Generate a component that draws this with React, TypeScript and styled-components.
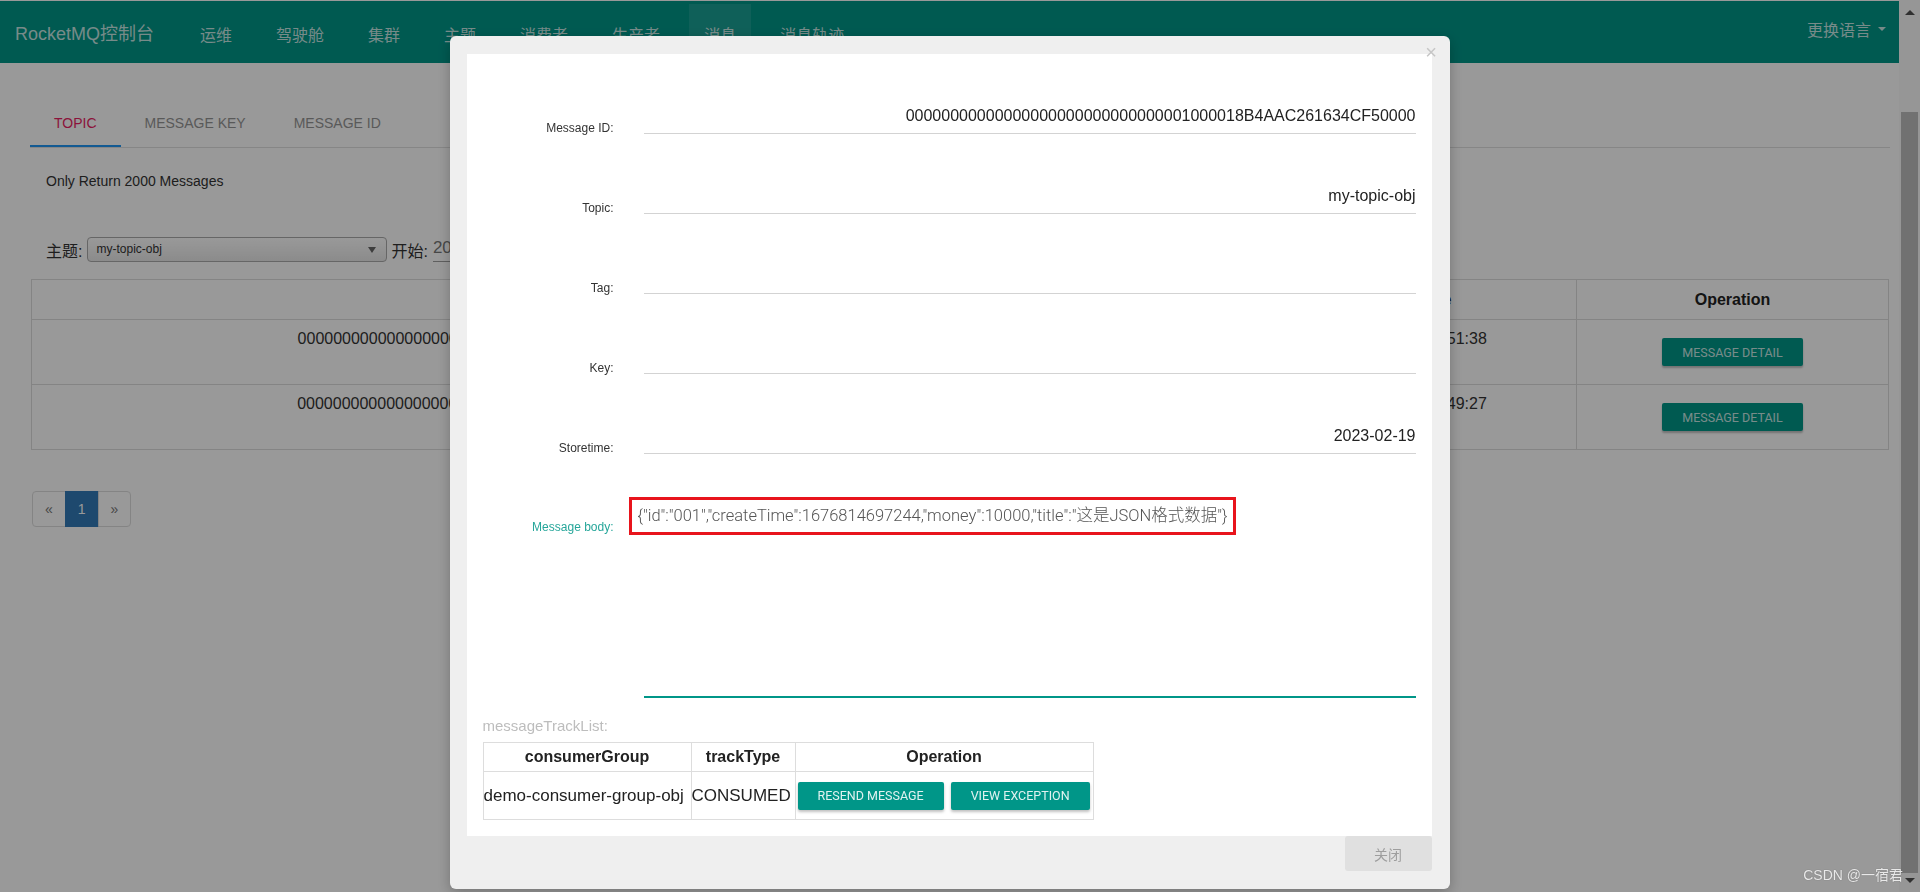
import React from "react";
import styled, { createGlobalStyle } from "styled-components";

const TEAL = "#009688";

const GlobalStyle = createGlobalStyle`
  html, body { margin: 0; padding: 0; height: 100%; overflow: hidden; }
  body {
    font-family: "Liberation Sans", Arial, "Noto Sans CJK SC", sans-serif;
    color: #333;
    background: #fff;
  }
  * { box-sizing: border-box; }
`;

/* ---------- page under the dialog ---------- */

const Page = styled.div`
  display: flex;
  width: 1920px;
  height: 892px;
`;

const Main = styled.div`
  flex: 1;
  min-width: 0;
  display: flex;
  flex-direction: column;
  background: #fff;
`;

const Navbar = styled.header`
  height: 63px;
  border-top: 1px solid #fff;
  background: ${TEAL};
  display: flex;
  align-items: stretch;
  padding: 0 13px 0 15px;
  color: rgba(255, 255, 255, 0.78);
  font-family: "Liberation Sans", Arial, "Noto Sans CJK SC", sans-serif;
`;

const Brand = styled.div`
  display: flex;
  align-items: center;
  font-size: 18px;
  margin-right: 24px;
`;

const NavList = styled.nav`
  display: flex;
  flex: 1;
`;

const NavItem = styled.div<{ $active?: boolean }>`
  display: flex;
  align-items: center;
  margin: 3px 7px 0;
  padding: 0 15px;
  font-size: 16px;
  background: ${(p) => (p.$active ? "rgba(255,255,255,0.1)" : "transparent")};
`;

const LangMenu = styled.div`
  display: flex;
  align-items: center;
  gap: 7px;
  font-size: 16px;
  padding-bottom: 6px;
`;

const Caret = styled.span`
  width: 0;
  height: 0;
  border-left: 4px solid transparent;
  border-right: 4px solid transparent;
  border-top: 4px solid rgba(255, 255, 255, 0.78);
`;

const Content = styled.main`
  flex: 1;
  padding: 36px 9px 0 30px;
`;

const TabBar = styled.div`
  display: flex;
  height: 49px;
  border-bottom: 1px solid #e0e0e0;
`;

const Tab = styled.div<{ $active?: boolean }>`
  height: 48px;
  padding: 0 24px;
  display: flex;
  align-items: center;
  font-size: 14px;
  color: ${(p) => (p.$active ? "#e91e63" : "#959595")};
  box-shadow: ${(p) => (p.$active ? "inset 0 -2px 0 #2196f3" : "none")};
`;

const Notice = styled.div`
  margin: 24px 0 0 16px;
  font-size: 14px;
  line-height: 18px;
  color: #333;
`;

const QueryRow = styled.div`
  display: flex;
  align-items: center;
  height: 25px;
  margin: 47px 0 0 16px;
`;

const QueryLabel = styled.span`
  font-size: 16px;
  color: #333;
  margin-right: 5px;
`;

const FakeSelect = styled.div`
  width: 300px;
  height: 25px;
  border: 1px solid #aaa;
  border-radius: 4px;
  background: linear-gradient(#fff 0%, #f4f4f4 50%, #e8e8e8 100%);
  font-size: 12px;
  line-height: 23px;
  padding: 0 10px 0 8px;
  margin-right: 4px;
  color: #333;
  display: flex;
  justify-content: space-between;
  align-items: center;
`;

const SelectArrow = styled.span`
  width: 0;
  height: 0;
  border-left: 4px solid transparent;
  border-right: 4px solid transparent;
  border-top: 6px solid #666;
`;

const DateInput = styled.div`
  width: 300px;
  height: 25px;
  border-bottom: 1px solid #9e9e9e;
  font-size: 17px;
  color: #777;
  line-height: 22px;
`;

const MsgTable = styled.table`
  margin: 17px 2px 0 1px;
  width: calc(100% - 3px);
  table-layout: fixed;
  border-collapse: collapse;
  font-size: 16px;
  color: #333;
  th, td { border: 1px solid #ddd; text-align: center; }
  th { height: 40px; font-weight: bold; color: #222; }
  td { height: 65px; vertical-align: top; padding: 8px 0; line-height: 22px; }
`;

const DetailButton = styled.button`
  margin: 10px 0 0;
  height: 28px;
  padding: 0 20px;
  border: none;
  border-radius: 2px;
  background: ${TEAL};
  color: rgba(255, 255, 255, 0.8);
  font-family: Roboto, "Liberation Sans", sans-serif;
  font-size: 12.5px;
  box-shadow: 0 2px 2px rgba(0, 0, 0, 0.25);
`;

const Pagination = styled.div`
  display: inline-flex;
  margin: 41px 0 0 2px;
  border-radius: 4px;
`;

const PageItem = styled.span<{ $active?: boolean }>`
  display: block;
  padding: 7px 12px;
  line-height: 20px;
  font-size: 14px;
  margin-left: -1px;
  border: 1px solid ${(p) => (p.$active ? "#337ab7" : "#ddd")};
  background: ${(p) => (p.$active ? "#337ab7" : "#fff")};
  color: ${(p) => (p.$active ? "#fff" : "#777")};
  &:first-child { border-radius: 4px 0 0 4px; margin-left: 0; }
  &:last-child { border-radius: 0 4px 4px 0; }
`;

const ScrollBar = styled.div`
  width: 21px;
  background: #fbfbfb;
  display: flex;
  flex-direction: column;
  align-items: center;
`;

const ArrowUp = styled.span`
  margin-top: 10px;
  width: 0;
  height: 0;
  border-left: 5px solid transparent;
  border-right: 5px solid transparent;
  border-bottom: 5px solid #505050;
`;

const ScrollThumb = styled.div`
  margin-top: 97px;
  width: 17px;
  flex: 1;
  background: #bcbcbc;
`;

const ArrowDown = styled.span`
  margin: 5px 0 9px;
  width: 0;
  height: 0;
  border-left: 5px solid transparent;
  border-right: 5px solid transparent;
  border-top: 5px solid #505050;
`;

/* ---------- dialog ---------- */

const Backdrop = styled.div`
  position: fixed;
  inset: 0;
  background: rgba(0, 0, 0, 0.4);
`;

const ModalLayer = styled.div`
  position: fixed;
  top: 0;
  left: 0;
  right: 21px;
  bottom: 0;
  display: flex;
  justify-content: center;
  align-items: flex-start;
  padding-top: 36px;
`;

const Modal = styled.div`
  position: relative;
  width: 1000px;
  height: 853px;
  background: #efefef;
  border-radius: 6px;
  padding: 18px 18px 18px 17px;
  display: flex;
  flex-direction: column;
  box-shadow: 0 4px 14px rgba(0, 0, 0, 0.25);
`;

const CloseX = styled.span`
  position: absolute;
  top: 6px;
  right: 12px;
  width: 13px;
  text-align: center;
  font-size: 20px;
  line-height: 20px;
  color: #c6c6c6;
`;

const ModalBody = styled.div`
  height: 782px;
  background: #fff;
  padding: 0 16px;
  display: flex;
  flex-direction: column;
`;

const FormRow = styled.div`
  display: grid;
  grid-template-columns: 131px 1fr;
  column-gap: 30px;
  height: 80px;
  align-items: end;
`;

const FieldLabel = styled.label<{ $focused?: boolean }>`
  text-align: right;
  font-size: 12px;
  line-height: 14px;
  margin-bottom: -1px;
  color: ${(p) => (p.$focused ? "#26a69a" : "#333")};
`;

const FieldValue = styled.div`
  height: 41px;
  padding-top: 5px;
  border-bottom: 1px solid #d3d3d3;
  text-align: right;
  font-size: 16px;
  line-height: 35px;
  color: #222;
`;

const BodyRow = styled.div`
  display: grid;
  grid-template-columns: 131px 1fr;
  column-gap: 30px;
  align-items: start;
`;

const BodyLabel = styled(FieldLabel)`
  padding-top: 66px;
`;

const BodyField = styled.div`
  margin-top: 43px;
  height: 201px;
  border-bottom: 2px solid ${TEAL};
`;

const Annotation = styled.span`
  display: inline-block;
  margin-left: -15px;
  border: 3px solid #e8141c;
  padding: 0 6px;
  line-height: 32px;
  font-family: Roboto, "Noto Sans CJK SC", sans-serif;
  font-weight: 300;
  font-size: 16.5px;
  color: #555;
  white-space: nowrap;
`;

const TrackTitle = styled.div`
  margin-top: 19px;
  font-size: 15px;
  line-height: 18px;
  color: #bdbdbd;
`;

const TrackTable = styled.table`
  margin-top: 7px;
  width: 610px;
  table-layout: fixed;
  border-collapse: collapse;
  color: #222;
  th, td { border: 1px solid #ddd; padding: 0; }
  th { height: 29px; font-size: 16px; font-weight: bold; text-align: center; }
  td { height: 48px; font-size: 17px; text-align: left; white-space: nowrap; }
`;

const ActionCell = styled.div`
  display: flex;
  gap: 7px;
  padding: 0 2px;
`;

const ActionButton = styled.button`
  height: 28px;
  padding: 0 20px;
  border: none;
  border-radius: 2px;
  background: ${TEAL};
  color: rgba(255, 255, 255, 0.88);
  font-family: Roboto, "Liberation Sans", sans-serif;
  font-size: 12.5px;
  box-shadow: 0 2px 3px rgba(0, 0, 0, 0.25);
`;

const ModalFooter = styled.div`
  display: flex;
  justify-content: flex-end;
`;

const CloseButton = styled.button`
  width: 87px;
  height: 35px;
  border: none;
  border-radius: 3px;
  background: #e0e0e0;
  color: #9e9e9e;
  font-family: "Noto Sans CJK SC", sans-serif;
  font-size: 14px;
`;

const Watermark = styled.div`
  position: fixed;
  right: 17px;
  bottom: 9px;
  font-size: 14px;
  line-height: 16px;
  color: rgba(255, 255, 255, 0.85);
  font-family: "Liberation Sans", "Noto Sans CJK SC", sans-serif;
  text-shadow: 0 0 1px rgba(0, 0, 0, 0.4);
`;

const NAV = ["运维", "驾驶舱", "集群", "主题", "消费者", "生产者", "消息", "消息轨迹"];
const MSG_ID = "0000000000000000000000000000000" + "1000018B4AAC261634CF50000";
const ROWS = [
  { id: MSG_ID, tag: "", key: "", time: "2023-02-19 21:51:38" },
  { id: "0000000000000000000000000000000" + "1000018B4AAC261634C2A0000", tag: "", key: "", time: "2023-02-19 21:49:27" },
];

const FIELDS: [string, string][] = [
  ["Message ID:", MSG_ID],
  ["Topic:", "my-topic-obj"],
  ["Tag:", ""],
  ["Key:", ""],
  ["Storetime:", "2023-02-19"],
];

export default function App() {
  return (
    <>
      <GlobalStyle />
      <Page>
        <Main>
          <Navbar>
            <Brand>RocketMQ控制台</Brand>
            <NavList>
              {NAV.map((n) => (
                <NavItem key={n} $active={n === "消息"}>
                  {n}
                </NavItem>
              ))}
            </NavList>
            <LangMenu>
              更换语言
              <Caret />
            </LangMenu>
          </Navbar>
          <Content>
            <TabBar>
              <Tab $active>TOPIC</Tab>
              <Tab>MESSAGE KEY</Tab>
              <Tab>MESSAGE ID</Tab>
            </TabBar>
            <Notice>Only Return 2000 Messages</Notice>
            <QueryRow>
              <QueryLabel>主题:</QueryLabel>
              <FakeSelect>
                my-topic-obj
                <SelectArrow />
              </FakeSelect>
              <QueryLabel>开始:</QueryLabel>
              <DateInput>2023-02-19 00:00:00</DateInput>
            </QueryRow>
            <MsgTable>
              <colgroup>
                <col style={{ width: 1042 }} />
                <col style={{ width: 87 }} />
                <col style={{ width: 88 }} />
                <col style={{ width: 328 }} />
                <col style={{ width: 312 }} />
              </colgroup>
              <thead>
                <tr>
                  <th>Message ID</th>
                  <th>Tag</th>
                  <th>Message Key</th>
                  <th>StoreTime</th>
                  <th>Operation</th>
                </tr>
              </thead>
              <tbody>
                {ROWS.map((r) => (
                  <tr key={r.id}>
                    <td>{r.id}</td>
                    <td>{r.tag}</td>
                    <td>{r.key}</td>
                    <td>{r.time}</td>
                    <td>
                      <DetailButton>MESSAGE DETAIL</DetailButton>
                    </td>
                  </tr>
                ))}
              </tbody>
            </MsgTable>
            <Pagination>
              <PageItem>«</PageItem>
              <PageItem $active>1</PageItem>
              <PageItem>»</PageItem>
            </Pagination>
          </Content>
        </Main>
        <ScrollBar>
          <ArrowUp />
          <ScrollThumb />
          <ArrowDown />
        </ScrollBar>
      </Page>

      <Backdrop />

      <ModalLayer>
        <Modal>
          <CloseX>×</CloseX>
          <ModalBody>
            {FIELDS.map(([label, value]) => (
              <FormRow key={label}>
                <FieldLabel>{label}</FieldLabel>
                <FieldValue>{value}</FieldValue>
              </FormRow>
            ))}
            <BodyRow>
              <BodyLabel $focused>Message body:</BodyLabel>
              <BodyField>
                <Annotation>
                  {'{"id":"001","createTime":1676814697244,"money":10000,"title":"这是JSON格式数据"}'}
                </Annotation>
              </BodyField>
            </BodyRow>
            <TrackTitle>messageTrackList:</TrackTitle>
            <TrackTable>
              <colgroup>
                <col style={{ width: 208 }} />
                <col style={{ width: 104 }} />
                <col style={{ width: 298 }} />
              </colgroup>
              <thead>
                <tr>
                  <th>consumerGroup</th>
                  <th>trackType</th>
                  <th>Operation</th>
                </tr>
              </thead>
              <tbody>
                <tr>
                  <td>demo-consumer-group-obj</td>
                  <td>CONSUMED</td>
                  <td>
                    <ActionCell>
                      <ActionButton>RESEND MESSAGE</ActionButton>
                      <ActionButton>VIEW EXCEPTION</ActionButton>
                    </ActionCell>
                  </td>
                </tr>
              </tbody>
            </TrackTable>
          </ModalBody>
          <ModalFooter>
            <CloseButton>关闭</CloseButton>
          </ModalFooter>
        </Modal>
      </ModalLayer>

      <Watermark>CSDN @一宿君</Watermark>
    </>
  );
}
